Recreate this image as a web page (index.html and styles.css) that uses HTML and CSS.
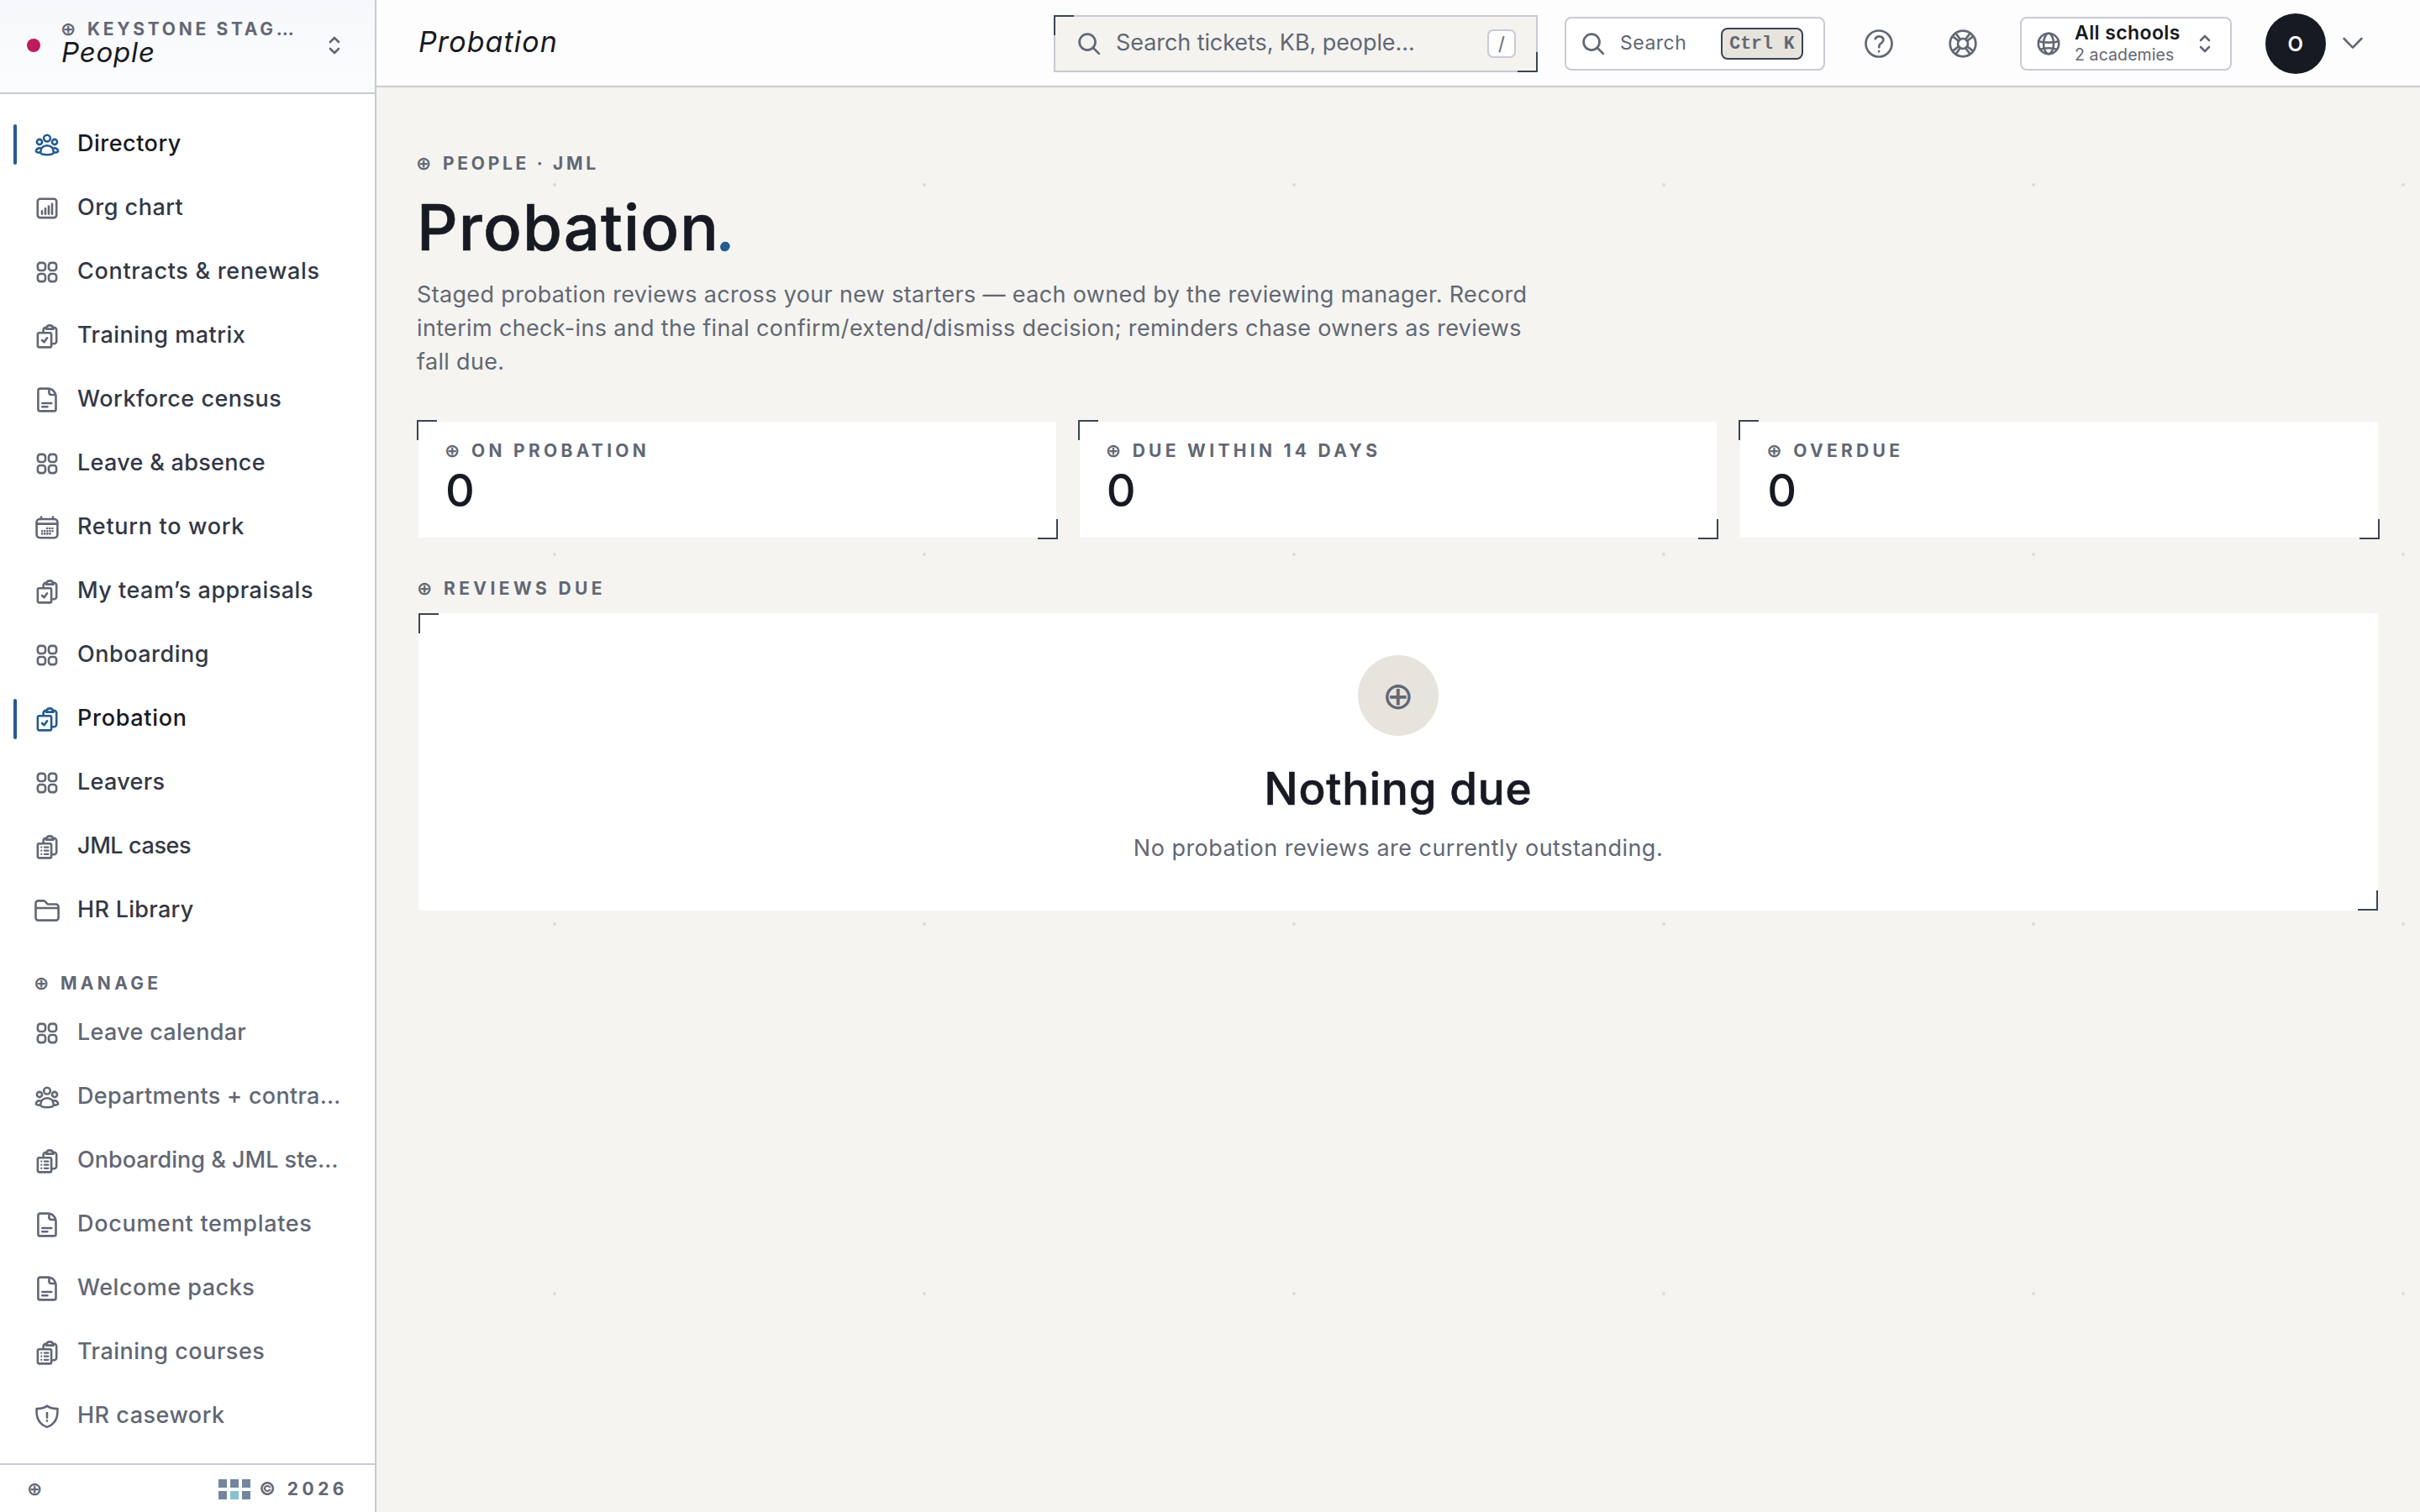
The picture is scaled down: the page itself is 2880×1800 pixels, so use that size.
FILE: index.html
```html
<!DOCTYPE html>
<html lang="en">
<head>
<meta charset="utf-8">
<title>Probation</title>
<link rel="stylesheet" href="styles.css">
</head>
<body>
<svg class="sprite" aria-hidden="true">
  <symbol id="i-people" viewBox="0 0 32 32"><circle cx="16" cy="8.6" r="3.9"/><circle cx="7" cy="13" r="3.1"/><circle cx="25" cy="13" r="3.1"/><path d="M8.2 25.3C8.2 20.4 11.2 17.2 16 17.2S23.8 20.4 23.8 25.3C23.8 27.2 20 28.2 16 28.2S8.2 27.2 8.2 25.3ZM8 20.2C4.8 20 2.9 22 2.9 24.4C3.9 25.5 6 25.8 8.2 25.6M24 20.2C27.2 20 29.1 22 29.1 24.4C28.1 25.5 26 25.8 23.8 25.6"/></symbol>
  <symbol id="i-chart" viewBox="0 0 32 32"><rect x="4.8" y="4.7" width="22.4" height="22.4" rx="3"/><path d="M10 19.4v3.4M14 16.4v6.4M18 13.6v9.2M22 10.7v12.1"/></symbol>
  <symbol id="i-grid" viewBox="0 0 32 32"><rect x="4.9" y="4.9" width="9.1" height="9.1" rx="3"/><rect x="18" y="4.9" width="9.1" height="9.1" rx="3"/><rect x="4.9" y="18" width="9.1" height="9.1" rx="3"/><rect x="18" y="18" width="9.1" height="9.1" rx="3"/></symbol>
  <symbol id="i-check" viewBox="0 0 32 32"><rect x="4.9" y="12.2" width="16.2" height="17.2" rx="1.6"/><path d="M11.6 11.8V8.8a3 3 0 0 1 3-3M23.4 5.8h.8a3 3 0 0 1 3 3v13.4a3 3 0 0 1-3 3h-2.4M14.8 7.6c.4-2.600 2-4.200 4.400-4.200s4 1.600 4.400 4.200zM10 21l2.500 2.300 3.600-5"/></symbol>
  <symbol id="i-list" viewBox="0 0 32 32"><rect x="4.9" y="12.2" width="16.2" height="17.2" rx="1.6"/><path d="M11.6 11.8V8.8a3 3 0 0 1 3-3M23.4 5.8h.8a3 3 0 0 1 3 3v13.4a3 3 0 0 1-3 3h-2.4M14.8 7.6c.4-2.600 2-4.200 4.400-4.200s4 1.600 4.400 4.200z"/><path class="rows" d="M9.2 16.6h.1M9.2 20.7h.1M9.2 24.8h.1M12.9 16.6h4.6M12.900 20.700h4.600M12.900 24.800h4.600"/></symbol>
  <symbol id="i-doc" viewBox="0 0 32 32"><path d="M7.6 2.6H17a9.5 9.5 0 0 1 9.5 9.5V27.2a2.2 2.2 0 0 1-2.2 2.2H7.6a2.2 2.2 0 0 1-2.2-2.2V4.8a2.2 2.2 0 0 1 2.2-2.2ZM18.4 3v4.6a2.4 2.4 0 0 0 2.4 2.4h5M10.3 20h11M10.3 24.3h6.2"/></symbol>
  <symbol id="i-cal" viewBox="0 0 32 32"><rect x="3.6" y="6" width="24.8" height="22.2" rx="3.6"/><path d="M9 3.6V6M23 3.6V6M3.6 11.6h24.8"/><path class="dots" d="M16 17h6.6M10 20.2h12.6M10 23.4h9.6"/></symbol>
  <symbol id="i-folder" viewBox="0 0 32 32"><path d="M2.5 24.6V7.4a3 3 0 0 1 3-3h6.3c1 0 1.7.4 2.3 1.1l1.6 1.9c.6.7 1.3 1.1 2.3 1.1h8.6a3 3 0 0 1 3 3v13.1a3 3 0 0 1-3 3H5.5a3 3 0 0 1-3-3ZM2.5 13h27"/></symbol>
  <symbol id="i-shield" viewBox="0 0 32 32"><path d="M16 3.6C12.6 6.2 8.4 7.1 3.6 7.1C2.9 17.4 5.6 25.2 16 28.9C26.4 25.2 29.1 17.4 28.4 7.1C23.6 7.1 19.4 6.2 16 3.6ZM16 12v5.6M16 21.4v.2"/></symbol>
  <symbol id="i-sort" viewBox="0 0 16 22"><path d="M3 7l5-5 5 5M3 15l5 5 5-5"/></symbol>
  <symbol id="i-search" viewBox="0 0 32 32"><circle cx="13.8" cy="13.8" r="10.8"/><path d="M21.6 21.6l8 8"/></symbol>
  <symbol id="i-help" viewBox="0 0 34 34"><circle cx="17" cy="17" r="15.5"/><path d="M12.6 11.2c1.3-2.2 3-3 5-2.8c2.9.2 4.7 2 4.7 4.2c0 3-2.6 3.8-4 5.2c-1 1-1.1 1.9-1.1 3.4M17.1 26.2v.1"/></symbol>
  <symbol id="i-buoy" viewBox="0 0 34 34"><circle cx="17" cy="17" r="15.3"/><circle cx="17" cy="17" r="6"/><path d="M6.3 9.4l5.6 4.4M9.6 6.1l4.2 5.7M24.4 6.1l-4.2 5.7M27.7 9.4l-5.6 4.4M6.3 24.6l5.6-4.4M9.6 27.9l4.2-5.7M24.4 27.9l-4.2-5.7M27.7 24.6l-5.6-4.4"/></symbol>
  <symbol id="i-globe" viewBox="0 0 28 28"><circle cx="14" cy="14" r="12.2"/><ellipse cx="14" cy="14" rx="6" ry="12.2"/><path d="M2 11.2c3.5 1 7.6 1.4 12 1.4s8.5-.4 12-1.4M4 20.8c3-1 6.4-1.5 10-1.5s7 .5 10 1.5"/></symbol>
  <symbol id="i-down" viewBox="0 0 24 16"><path d="M1.6 2L12 12.6 22.4 2"/></symbol>
</svg>

<div class="app">
  <aside class="sidebar">
    <div class="brand">
      <span class="brand-dot"></span>
      <div class="brand-text">
        <div class="eyebrow brand-org"><span class="mark">⊕</span>KEYSTONE STAG…</div>
        <div class="brand-name">People</div>
      </div>
      <svg class="sort"><use href="#i-sort"/></svg>
    </div>
    <nav class="nav">
      <a class="item active"><svg><use href="#i-people"/></svg><span>Directory</span></a>
      <a class="item"><svg><use href="#i-chart"/></svg><span>Org chart</span></a>
      <a class="item"><svg><use href="#i-grid"/></svg><span class="wide">Contracts &amp; renewals</span></a>
      <a class="item"><svg><use href="#i-check"/></svg><span>Training matrix</span></a>
      <a class="item"><svg><use href="#i-doc"/></svg><span>Workforce census</span></a>
      <a class="item"><svg><use href="#i-grid"/></svg><span class="snug">Leave &amp; absence</span></a>
      <a class="item"><svg><use href="#i-cal"/></svg><span class="wide">Return to work</span></a>
      <a class="item"><svg><use href="#i-check"/></svg><span>My team’s appraisals</span></a>
      <a class="item"><svg><use href="#i-grid"/></svg><span>Onboarding</span></a>
      <a class="item active"><svg><use href="#i-check"/></svg><span class="wide">Probation</span></a>
      <a class="item"><svg><use href="#i-grid"/></svg><span class="snug">Leavers</span></a>
      <a class="item"><svg><use href="#i-list"/></svg><span class="tight">JML cases</span></a>
      <a class="item"><svg><use href="#i-folder"/></svg><span class="snug">HR Library</span></a>
      <div class="eyebrow group"><span class="mark">⊕</span>MANAGE</div>
      <a class="item sub"><svg><use href="#i-grid"/></svg><span class="snug">Leave calendar</span></a>
      <a class="item sub"><svg><use href="#i-people"/></svg><span class="snug">Departments + contra…</span></a>
      <a class="item sub"><svg><use href="#i-list"/></svg><span class="snugger">Onboarding &amp; JML ste…</span></a>
      <a class="item sub"><svg><use href="#i-doc"/></svg><span class="wide">Document templates</span></a>
      <a class="item sub"><svg><use href="#i-doc"/></svg><span>Welcome packs</span></a>
      <a class="item sub"><svg><use href="#i-list"/></svg><span>Training courses</span></a>
      <a class="item sub"><svg><use href="#i-shield"/></svg><span>HR casework</span></a>
    </nav>
    <div class="side-foot eyebrow">
      <span class="mark">⊕</span>
      <span class="tiles"><i></i><i></i><i></i><i></i><i class="lit"></i><i></i></span>
      <span class="year">© 2026</span>
    </div>
  </aside>

  <div class="page">
    <header class="topbar">
      <div class="crumb">Probation</div>
      <div class="search-main corners">
        <svg class="glass"><use href="#i-search"/></svg>
        <span class="placeholder">Search tickets, KB, people...</span>
        <kbd class="slash">/</kbd>
      </div>
      <div class="search-cmd">
        <svg class="glass"><use href="#i-search"/></svg>
        <span>Search</span>
        <kbd class="combo">Ctrl K</kbd>
      </div>
      <div class="icon-btn help"><svg><use href="#i-help"/></svg></div>
      <div class="icon-btn buoy"><svg><use href="#i-buoy"/></svg></div>
      <div class="scope">
        <svg class="globe"><use href="#i-globe"/></svg>
        <div class="scope-text"><b>All schools</b><small>2 academies</small></div>
        <svg class="sort"><use href="#i-sort"/></svg>
      </div>
      <div class="avatar">O</div>
      <svg class="down"><use href="#i-down"/></svg>
    </header>

    <main class="content">
      <div class="eyebrow trail"><span class="mark">⊕</span>PEOPLE · JML</div>
      <h1>Probation<em>.</em></h1>
      <p class="lead">Staged probation reviews across your new starters — each owned by the reviewing manager. Record<br>interim check-ins and the final confirm/extend/dismiss decision; reminders chase owners as reviews<br>fall due.</p>
      <section class="stats">
        <div class="stat corners"><div class="eyebrow"><span class="mark">⊕</span>ON PROBATION</div><div class="num">0</div></div>
        <div class="stat corners"><div class="eyebrow"><span class="mark">⊕</span>DUE WITHIN 14 DAYS</div><div class="num">0</div></div>
        <div class="stat corners"><div class="eyebrow"><span class="mark">⊕</span>OVERDUE</div><div class="num">0</div></div>
      </section>
      <div class="eyebrow section-label"><span class="mark">⊕</span>REVIEWS DUE</div>
      <section class="empty corners">
        <div class="badge">⊕</div>
        <h2>Nothing due</h2>
        <p>No probation reviews are currently outstanding.</p>
      </section>
    </main>
  </div>
</div>
</body>
</html>
```

FILE: styles.css
```css
:root {
  --paper: #f5f4f0;
  --line: #c8cad5;
  --ink: #171a22;
  --text: #333845;
  --muted: #626774;
  --accent: #245b8f;
  --corner: #3b4456;
}
*, *::before, *::after { box-sizing: border-box; }
body {
  margin: 0;
  font-family: Inter, "Liberation Sans", sans-serif;
  font-size: 27px;
  letter-spacing: .34px;
  color: var(--ink);
  background: var(--paper);
}
svg { fill: none; stroke: currentColor; stroke-width: 2.6; stroke-linecap: round; stroke-linejoin: round; flex: none; }
.sprite { display: none; }
.rows { stroke-width: 2.2; }
.dots { stroke-width: 2.6; stroke-dasharray: .1 3.05; }
.app { display: flex; width: 2880px; height: 1800px; overflow: hidden; }

.eyebrow {
  font-size: 21px;
  font-weight: 700;
  line-height: 24px;
  letter-spacing: 4.3px;
  color: var(--muted);
  white-space: nowrap;
}
.mark {
  display: inline-block;
  width: 31px;
  font: 700 22px/20px "DejaVu Sans", sans-serif;
  letter-spacing: 0;
  text-indent: -1px;
}

/* Sidebar */
.sidebar { width: 448px; flex: none; display: flex; flex-direction: column; background: #fff; border-right: 2px solid var(--line); }
.brand {
  height: 112px;
  flex: none;
  display: flex;
  align-items: center;
  padding: 0 40px 2px 32px;
  border-bottom: 2px solid var(--line);
  background: linear-gradient(#f7f8fb, #fbfcfe);
}
.brand-dot { width: 16px; height: 16px; border-radius: 50%; background: #bf1a5c; }
.brand-text { flex: 1; padding-left: 25px; margin-top: -8px; }
.brand-org { letter-spacing: 3.7px; }
.brand-name { font-size: 33px; line-height: 32px; font-style: italic; margin-top: -1px; letter-spacing: .8px; }
.sort { width: 16px; height: 22px; color: var(--muted); }
.nav { flex: 1; min-height: 0; overflow: hidden; padding: 22px 16px 0; }
.item { position: relative; display: flex; align-items: center; gap: 20px; height: 76px; padding-left: 24px; font-weight: 500; letter-spacing: .5px; color: var(--text); white-space: nowrap; }
.item svg { width: 32px; height: 32px; color: var(--muted); }
.item span { padding-bottom: 3px; }
.item .wide { letter-spacing: .7px; }
.item .snug { letter-spacing: .3px; }
.item .snugger { letter-spacing: 0; }
.item .tight { letter-spacing: -.4px; }
.item.sub { color: var(--muted); }
.item.active { color: var(--ink); }
.item.active svg { color: var(--accent); }
.item.active::before { content: ""; position: absolute; left: 0; top: 14px; width: 4px; height: 48px; border-radius: 2px; background: var(--accent); }
.group { padding: 37px 0 9px 25px; }
.side-foot { height: 58px; flex: none; display: flex; align-items: center; padding: 2px 32px 0 33px; border-top: 2px solid var(--line); }
.tiles { display: grid; grid-template-columns: repeat(3, 10px); gap: 4px; margin-left: auto; }
.tiles i { height: 10px; background: #74869d; }
.tiles .lit { background: #86c2d6; }
.year { margin-left: 11px; letter-spacing: 4.5px; }

/* Top bar */
.page { flex: 1; min-width: 0; display: flex; flex-direction: column; }
.topbar { height: 104px; flex: none; display: flex; align-items: center; padding: 0 68px 0 48px; border-bottom: 2px solid var(--line); background: #fdfdfd; color: var(--muted); }
.topbar > * { position: relative; top: 1px; }
.crumb { flex: 1; padding: 0 0 5px 2px; font-size: 34px; font-style: italic; color: var(--ink); letter-spacing: 1.1px; }
.glass { width: 28px; height: 28px; stroke-width: 3.1; }
.search-main { width: 576px; height: 68px; display: flex; align-items: center; padding: 0 24px 0 26px; border: 2px solid var(--line); background: #f4f3f0; letter-spacing: -.08px; }
.placeholder { flex: 1; padding: 0 0 3px 18px; }
kbd { display: flex; align-items: center; justify-content: center; letter-spacing: 0; }
.slash { width: 34px; height: 34px; border: 2px solid var(--line); border-radius: 7px; background: #fff; font: 22px Inter, sans-serif; }
.search-cmd { width: 310px; height: 64px; display: flex; align-items: center; margin-left: 32px; padding: 0 24px 0 18px; border: 2px solid var(--line); border-radius: 8px; background: #fff; font-size: 23px; letter-spacing: .5px; }
.search-cmd span { flex: 1; padding: 0 0 2px 18px; }
.combo { width: 98px; height: 38px; border: 2px solid var(--corner); border-radius: 8px; background: #e7e4de; font: 700 21.5px "Liberation Mono", monospace; }
.icon-btn { width: 64px; height: 64px; display: grid; place-items: center; margin-left: 32px; }
.icon-btn svg { width: 34px; height: 34px; stroke-width: 2.7; }
.buoy { margin-left: 36px; }
.scope { width: 252px; height: 64px; display: flex; align-items: center; margin-left: 36px; padding: 0 22px 0 18px; border: 2px solid var(--line); border-radius: 8px; background: #fff; }
.globe { width: 28px; height: 28px; }
.scope-text { flex: 1; padding-left: 17px; margin-top: -2px; display: flex; flex-direction: column; }
.scope b { font-size: 23px; line-height: 28px; font-weight: 600; color: var(--ink); letter-spacing: .4px; }
.scope small { font-size: 19.5px; line-height: 24px; letter-spacing: .1px; }
.avatar { width: 72px; height: 72px; display: grid; place-items: center; margin-left: 40px; border-radius: 50%; background: var(--ink); color: #fff; font-size: 24px; font-weight: 600; }
.down { width: 24px; height: 16px; margin-left: 20px; }

/* L-shaped marks on opposite corners */
.corners { position: relative; }
.corners::before, .corners::after { content: ""; position: absolute; width: 24px; height: 24px; border: 0 solid var(--corner); }
.corners::before { left: -2px; top: -2px; border-width: 2px 0 0 2px; }
.corners::after { right: -2px; bottom: -2px; border-width: 0 2px 2px 0; }

/* Content */
.content {
  flex: 1;
  padding: 79px 48px 0;
  background: radial-gradient(circle, #dddcd9 1.5px, transparent 2.5px) -8px -104px / 440px 440px, var(--paper);
}
.trail { letter-spacing: 3.7px; }
h1, h2 { font-weight: 500; -webkit-text-stroke: .6px currentColor; }
h1 { margin: 23px 0 0; font-size: 76px; line-height: 80px; letter-spacing: 1.1px; }
h1 em { color: var(--accent); margin-left: -2px; }
.lead { margin: 21px 0 0; line-height: 40px; color: var(--muted); }
.stats { display: grid; grid-template-columns: repeat(3, 1fr); gap: 24px; margin-top: 49px; }
.section-label { margin-top: 47px; padding-left: 1px; letter-spacing: 4.4px; }
.stat { height: 142px; padding: 23px 32px; border: 2px solid var(--paper); background: #fff; }
.num { margin-top: 7px; font-size: 54px; line-height: 56px; font-weight: 500; }
.empty { height: 358px; margin-top: 15px; padding-top: 50px; display: flex; flex-direction: column; align-items: center; border: 2px solid var(--paper); background: #fff; }
.empty::before { left: 0; top: 0; }
.empty::after { right: 0; bottom: 0; }
.badge { width: 96px; height: 96px; display: grid; place-items: center; border-radius: 50%; background: #e7e4de; color: var(--muted); font: 45px/1 "DejaVu Sans", sans-serif; }
h2 { margin: 33px 0 0; font-size: 53px; line-height: 60px; letter-spacing: .8px; }
.empty p { margin: 21px 0 0; line-height: 40px; letter-spacing: .48px; color: var(--muted); }
```
